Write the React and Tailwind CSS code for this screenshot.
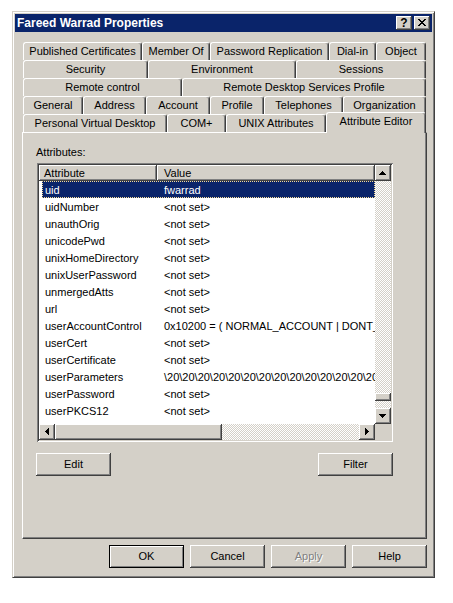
import React from "react";

const raised =
  "shadow-[inset_-1px_-1px_#404040,inset_1px_1px_#ffffff,inset_-2px_-2px_#808080,inset_2px_2px_#d4d0c8]";
const dither =
  "bg-[image:repeating-conic-gradient(#d4d0c8_0%_25%,#ffffff_0%_50%)] bg-[length:2px_2px]";

const tabRows = [
  [
    ["Published Certificates", "w-[119px]"],
    ["Member Of", "w-[68px]"],
    ["Password Replication", "w-[119px]"],
    ["Dial-in", "w-[47px]"],
    ["Object", "w-[50px]"],
  ],
  [
    ["Security", "w-[125px]"],
    ["Environment", "w-[148px]"],
    ["Sessions", "w-[130px]"],
  ],
  [
    ["Remote control", "w-[159px]"],
    ["Remote Desktop Services Profile", "w-[244px]"],
  ],
  [
    ["General", "w-[60px]"],
    ["Address", "w-[63px]"],
    ["Account", "w-[64px]"],
    ["Profile", "w-[54px]"],
    ["Telephones", "w-[79px]"],
    ["Organization", "w-[83px]"],
  ],
];

const lastRow = [
  ["Personal Virtual Desktop", "w-[144px]"],
  ["COM+", "w-[59px]"],
  ["UNIX Attributes", "w-[100px]"],
];

const items = [
  ["uid", "fwarrad"],
  ["uidNumber", "<not set>"],
  ["unauthOrig", "<not set>"],
  ["unicodePwd", "<not set>"],
  ["unixHomeDirectory", "<not set>"],
  ["unixUserPassword", "<not set>"],
  ["unmergedAtts", "<not set>"],
  ["url", "<not set>"],
  ["userAccountControl", "0x10200 = ( NORMAL_ACCOUNT | DONT_EXPIRE_PASSWD )"],
  ["userCert", "<not set>"],
  ["userCertificate", "<not set>"],
  ["userParameters", "\\20".repeat(30)],
  ["userPassword", "<not set>"],
  ["userPKCS12", "<not set>"],
  ["userPrincipalName", "fwarrad@contoso.local"],
];

const ARROWS = {
  up: "M7 6h1v1h1v1h1v1h1v1H4V9h1V8h1V7h1z",
  down: "M4 6h7v1h-1v1h-1v1h-1v1H7V9H6V8H5V7H4z",
  left: "M6 7h1V6h1V5h1V4h1v7H9v-1H8V9H7V8H6z",
  right: "M6 4h1v1h1v1h1v1h1v1H9v1H8v1H7v1H6z",
};

function ScrollBtn({ dir }) {
  return (
    <div className={`w-[16px] h-[16px] shrink-0 bg-[#d4d0c8] ${raised}`}>
      <svg width="16" height="16" viewBox="0 0 16 16" shapeRendering="crispEdges">
        <path d={ARROWS[dir]} fill="#000000" />
      </svg>
    </div>
  );
}

function Tab({ label, w }) {
  return (
    <div
      className={`${w} h-[18px] shrink-0 border-t border-l border-r border-t-white border-l-white border-r-[#404040] rounded-t-[3px] shadow-[inset_-1px_0_#808080] text-center leading-[17px] whitespace-nowrap overflow-hidden`}
    >
      {label}
    </div>
  );
}

function Button({ children, className = "" }) {
  return (
    <div
      className={`w-[75px] h-[23px] flex items-center justify-center bg-[#d4d0c8] ${raised} ${className}`}
    >
      {children}
    </div>
  );
}

export default function App() {
  return (
    <div className="w-[453px] h-[603px] bg-white pl-[12px] pt-[11px] font-['Liberation_Sans',Arial,sans-serif] text-[11px] text-black">
      <div className="w-[423px] h-[567px] bg-[#d4d0c8] border border-t-[#d4d0c8] border-l-[#d4d0c8] border-r-[#404040] border-b-[#404040] p-[2px] shadow-[inset_1px_1px_#ffffff,inset_-1px_-1px_#808080] flex flex-col">
        {/* Title bar */}
        <div className="h-[18px] shrink-0 bg-[#0a246a] flex items-center pl-[2px] pr-[2px]">
          <span className="text-white font-bold text-[12px] leading-[18px] whitespace-nowrap">
            Fareed Warrad Properties
          </span>
          <div className="ml-auto flex gap-[2px]">
            <div
              className={`w-[16px] h-[14px] bg-[#d4d0c8] ${raised} flex items-center justify-center font-bold text-[12px] leading-[14px] pb-[1px]`}
            >
              ?
            </div>
            <div className={`w-[16px] h-[14px] bg-[#d4d0c8] ${raised}`}>
              <svg width="16" height="14" viewBox="0 0 16 14" shapeRendering="crispEdges">
                <path
                  d="M4 3h2v1H4z M10 3h2v1h-2z M5 4h2v1H5z M9 4h2v1H9z M6 5h4v1H6z M7 6h2v1H7z M6 7h4v1H6z M5 8h2v1H5z M9 8h2v1H9z M4 9h2v1H4z M10 9h2v1h-2z"
                  fill="#000000"
                />
              </svg>
            </div>
          </div>
        </div>

        {/* Tabs */}
        <div className="mt-[10px] ml-[8px] w-[403px] flex flex-col">
          {tabRows.map((row, i) => (
            <div key={i} className="flex h-[18px]">
              {row.map(([label, w]) => (
                <Tab key={label} label={label} w={w} />
              ))}
            </div>
          ))}
          <div className="flex h-[18px] items-start">
            {lastRow.map(([label, w]) => (
              <Tab key={label} label={label} w={w} />
            ))}
            <div className="relative z-10 -mt-[2px] w-[100px] h-[21px] shrink-0 bg-[#d4d0c8] border-t border-l border-r border-t-white border-l-white border-r-[#404040] rounded-t-[3px] shadow-[inset_-1px_0_#808080] text-center leading-[17px] whitespace-nowrap">
              Attribute Editor
            </div>
          </div>
        </div>

        {/* Tab panel */}
        <div className="ml-[7px] w-[405px] h-[407px] shrink-0 border border-t-white border-l-white border-r-[#404040] border-b-[#404040] shadow-[inset_-1px_-1px_#808080] flex flex-col">
          <div className="ml-[13px] mt-[13px] h-[14px] leading-[13px]">Attributes:</div>

          {/* List view */}
          <div className="ml-[14px] mt-[3px] w-[356px] h-[279px] p-[2px] bg-white shadow-[inset_1px_1px_#808080,inset_-1px_-1px_#ffffff,inset_2px_2px_#404040,inset_-2px_-2px_#d4d0c8] flex flex-col">
            <div className="flex h-[259px]">
              <div className="w-[336px] overflow-hidden flex flex-col whitespace-nowrap">
                <div className="flex h-[16px] shrink-0">
                  <div className={`w-[118px] h-[16px] bg-[#d4d0c8] ${raised} pl-[5px] pt-[1px] leading-[15px]`}>
                    Attribute
                  </div>
                  <div className={`flex-1 h-[16px] bg-[#d4d0c8] ${raised} pl-[7px] pt-[1px] leading-[15px]`}>
                    Value
                  </div>
                </div>
                {items.map(([a, v], i) => (
                  <div
                    key={a}
                    className={`ml-[3px] flex h-[17px] shrink-0 pt-[2px] leading-[15px] ${
                      i === 0
                        ? "bg-[#0a246a] text-white outline outline-1 outline-dotted outline-[#f5db95] -outline-offset-1"
                        : ""
                    }`}
                  >
                    <div className="w-[115px] shrink-0 pl-[3px]">{a}</div>
                    <div className="pl-[7px]">{v}</div>
                  </div>
                ))}
              </div>
              <div className="w-[16px] flex flex-col">
                <ScrollBtn dir="up" />
                <div className={`flex-1 ${dither}`} />
                <div className={`h-[8px] shrink-0 bg-[#d4d0c8] ${raised}`} />
                <div className={`h-[7px] shrink-0 ${dither}`} />
                <ScrollBtn dir="down" />
              </div>
            </div>
            <div className="flex h-[16px]">
              <ScrollBtn dir="left" />
              <div className={`w-[167px] h-[16px] shrink-0 bg-[#d4d0c8] ${raised}`} />
              <div className={`flex-1 h-[16px] ${dither}`} />
              <ScrollBtn dir="right" />
              <div className="w-[16px] h-[16px] bg-[#d4d0c8]" />
            </div>
          </div>

          <div className="ml-[13px] mt-[11px] w-[357px] flex justify-between">
            <Button>Edit</Button>
            <Button>Filter</Button>
          </div>
        </div>

        {/* Dialog buttons */}
        <div className="mt-[6px] mr-[5px] flex justify-end gap-[6px]">
          <div className="w-[75px] h-[23px] border border-black bg-[#d4d0c8] shadow-[inset_1px_1px_#ffffff,inset_-1px_-1px_#808080] flex items-center justify-center">
            OK
          </div>
          <Button>Cancel</Button>
          <Button className="text-[#808080] [text-shadow:1px_1px_0_#ffffff]">Apply</Button>
          <Button>Help</Button>
        </div>
      </div>
    </div>
  );
}
